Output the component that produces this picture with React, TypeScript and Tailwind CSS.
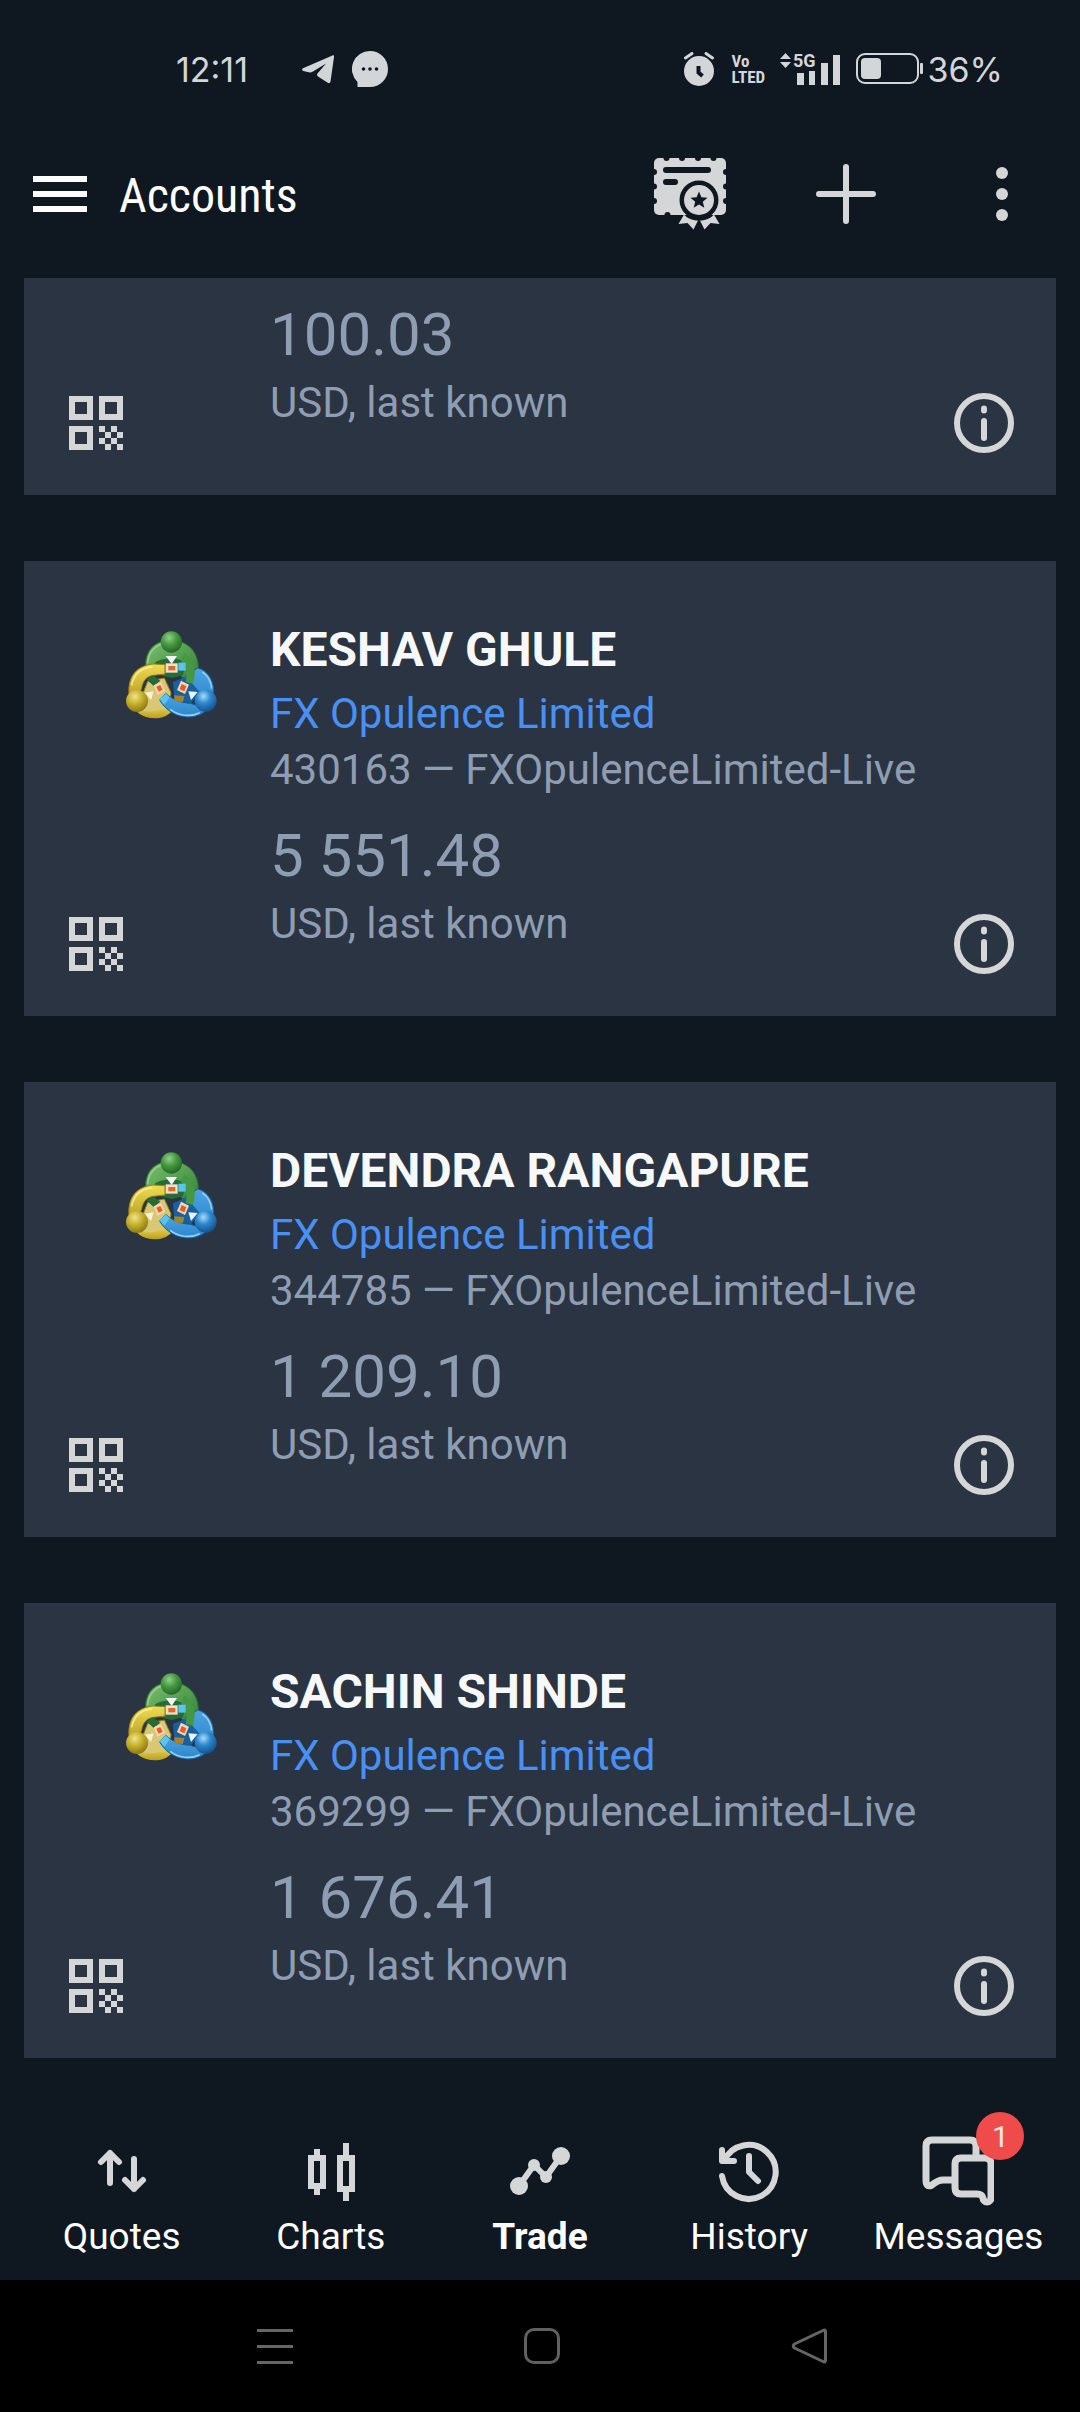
type Account = {
  name: string;
  broker: string;
  login: string;
  balance: string;
};

const accounts: Account[] = [
  { name: "KESHAV GHULE", broker: "FX Opulence Limited", login: "430163 — FXOpulenceLimited-Live", balance: "5 551.48" },
  { name: "DEVENDRA RANGAPURE", broker: "FX Opulence Limited", login: "344785 — FXOpulenceLimited-Live", balance: "1 209.10" },
  { name: "SACHIN SHINDE", broker: "FX Opulence Limited", login: "369299 — FXOpulenceLimited-Live", balance: "1 676.41" },
];

function QrIcon() {
  return (
    <svg className="size-[54px]" viewBox="0 0 9 9" fill="currentColor" fillRule="evenodd" shapeRendering="crispEdges" aria-hidden="true">
      <path d="M0 0h4v4H0zM1 1v2h2V1zM5 0h4v4H5zM6 1v2h2V1zM0 5h4v4H0zM1 6v2h2V6z" />
      <path d="M5 5h1v1H5zM7 5h1v1H7zM6 6h1v1H6zM8 6h1v1H8zM5 7h1v1H5zM7 7h1v1H7zM6 8h1v1H6zM8 8h1v1H8z" />
    </svg>
  );
}

function InfoIcon() {
  return (
    <svg className="size-[60px]" viewBox="0 0 60 60" fill="none" stroke="currentColor" strokeWidth="6" strokeLinecap="round" aria-hidden="true">
      <circle cx="30" cy="30" r="27" />
      <path d="M30 15.500V17.500M30 28V45" />
    </svg>
  );
}

function BrokerLogo() {
  return (
    <svg className="h-[90px] w-[92px]" viewBox="74 90 276 270" fill="none" aria-hidden="true">
      <defs>
        <radialGradient id="greenHead" cx="0.4" cy="0.3" r="0.7">
          <stop offset="0" stopColor="#8fd08a" />
          <stop offset="0.5" stopColor="#45983f" />
          <stop offset="1" stopColor="#24682a" />
        </radialGradient>
        <radialGradient id="yellowHead" cx="0.4" cy="0.3" r="0.7">
          <stop offset="0" stopColor="#f0e388" />
          <stop offset="0.5" stopColor="#c5b02c" />
          <stop offset="1" stopColor="#8d7a14" />
        </radialGradient>
        <radialGradient id="blueHead" cx="0.4" cy="0.3" r="0.7">
          <stop offset="0" stopColor="#a5dcfa" />
          <stop offset="0.45" stopColor="#3089cf" />
          <stop offset="1" stopColor="#135493" />
        </radialGradient>
        <linearGradient id="greenBody" x1="0" y1="0" x2="1" y2="1">
          <stop offset="0" stopColor="#7cc06f" />
          <stop offset="1" stopColor="#2f7f34" />
        </linearGradient>
        <linearGradient id="yellowBody" x1="0" y1="0" x2="0" y2="1">
          <stop offset="0" stopColor="#f0dc55" />
          <stop offset="1" stopColor="#b89d22" />
        </linearGradient>
        <linearGradient id="blueBody" x1="0" y1="0" x2="0" y2="1">
          <stop offset="0" stopColor="#4ca4e0" />
          <stop offset="1" stopColor="#2c86cc" />
        </linearGradient>
      </defs>
      <path d="M136 205C132 150 165 121 212 121c50 0 84 36 82 86-1 18-8 34-16 46l-26-12-14-20h-70Z" fill="url(#greenBody)" stroke="#2b6b35" strokeWidth="3" />
      <path d="M142 190c2-38 28-60 66-62" stroke="#b6e0a4" strokeWidth="5" opacity="0.6" />
      <path d="M162 190c14-18 86-22 94 4l-8 32-34 8-34-8Z" fill="#256c37" />
      <path d="M292 204c28 6 46 34 48 64 1 20-4 36-10 46l-60-30-28-46Z" fill="url(#blueBody)" stroke="#1c5c96" strokeWidth="3" />
      <path d="M306 216c16 10 26 28 28 50" stroke="#b3e1fb" strokeWidth="5" opacity="0.7" />
      <path d="M218 246l40-16 40 46-26 34-50-12Z" fill="#1a609f" />
      <path d="M142 244l50-10 20 44-4 38-40 36c-30 0-46-6-60-20Z" fill="#d8c876" stroke="#8c7b1d" strokeWidth="3" />
      <path d="M86 282c-4-54 24-86 74-90l34 2v28l-34 4c-22 3-32 16-36 38l-12 30Z" fill="url(#yellowBody)" stroke="#94841c" strokeWidth="3" />
      <path d="M94 256c6-34 26-52 62-56" stroke="#fff0a0" strokeWidth="5" opacity="0.8" />
      <path d="M110 326c28 14 68 8 98-12l4 22c-24 26-70 24-98 2Z" fill="url(#yellowBody)" />
      <path d="M252 160c34 22 36 60 26 92l-22-6c6-28 4-46-14-62Z" fill="#459742" />
      <path d="M178 300l18-20c20 18 42 28 74 30l52 16c-24 30-74 32-106 12-18-10-30-24-38-38Z" fill="url(#blueBody)" stroke="#185d9a" strokeWidth="3" />
      <path d="M210 328c24 20 60 24 88 10" stroke="#95d2f5" strokeWidth="5" />
      <path d="M178 298l18-18 12 12-16 22Z" fill="#5cc3ef" />
      <path d="M138 238l20-12 22 16-20 16Z" fill="#266a34" />
      <path d="M222 286l30 2-4 18-26-2Z" fill="#a3832b" />
      <path d="M196 168h34l-16 24Z" fill="#f3f6f8" />
      <path d="M134 278l26-4-8 26Z" fill="#f7f2dc" />
      <path d="M264 274l28 2-20 24Z" fill="#e9f5fc" />
      <path d="M234 188h22v24h-22z" fill="#59c4ee" />
      <path d="M196 190h36v28h-36z" fill="#f4dfc8" />
      <path d="M204 198h21v13h-21z" fill="#df6a2e" />
      <path d="M160 256l22-10 12 26-22 12Z" fill="#f7d7b4" />
      <path d="M168 260l12-5 7 14-12 6Z" fill="#ea5a27" />
      <path d="M242 242l24 12-12 28-24-12Z" fill="#f7d7b4" />
      <path d="M244 252l14 7-6 15-14-6Z" fill="#ea5a27" />
      <circle cx="213" cy="126" r="32" fill="url(#greenHead)" />
      <circle cx="110" cy="303" r="33" fill="url(#yellowHead)" />
      <circle cx="316" cy="302" r="33" fill="url(#blueHead)" />
    </svg>
  );
}

function CertificateIcon() {
  return (
    <svg className="size-[72px]" viewBox="0 0 72 72" fill="currentColor" aria-hidden="true">
      <defs>
        <mask id="stamp" maskUnits="userSpaceOnUse" x="0" y="0" width="72" height="72">
          <rect width="72" height="57" rx="5" fill="#fff" />
          <g fill="#000">
            <circle cx="12.500" cy="0" r="3" />
            <circle cx="28" cy="0" r="3" />
            <circle cx="44" cy="0" r="3" />
            <circle cx="59.500" cy="0" r="3" />
            <circle cx="0" cy="14" r="3" />
            <circle cx="0" cy="28.500" r="3" />
            <circle cx="0" cy="43" r="3" />
            <circle cx="72" cy="14" r="3" />
            <circle cx="72" cy="28.500" r="3" />
            <circle cx="72" cy="43" r="3" />
            <circle cx="13.500" cy="57" r="3" />
            <rect x="9" y="9" width="48" height="6" rx="3" />
            <rect x="9" y="21" width="15" height="6" rx="3" />
            <circle cx="45" cy="42" r="19.500" />
          </g>
        </mask>
      </defs>
      <rect width="72" height="57" mask="url(#stamp)" />
      <path d="M30 56.500 24.500 66l9-1 6 6.500L44 62.500C38 62.500 33 60 30 56.500ZM60 56.500 65.500 66l-9-1-6 6.500L46 62.500C52 62.500 57 60 60 56.500Z" />
      <path fillRule="evenodd" d="M45 27a15 15 0 1 1 0 30 15 15 0 0 1 0-30Zm0 6.500-2.400 5.700-6.100.5 4.700 4-1.500 6 5.300-3.200 5.300 3.200-1.500-6 4.700-4-6.100-.5Z" />
    </svg>
  );
}

function StatusBar() {
  return (
    <div className="flex h-[138px] items-center justify-between pr-[77px] pl-44 font-['Inter',sans-serif] text-[34px] text-[#d3d6d9]">
      <div className="flex items-center">
        <time>12:11</time>
        <svg className="ml-[54px] h-7 w-8" viewBox="0 0 32 28" fill="currentColor" aria-label="Telegram">
          <path d="M31 0.300C32 0 32.300 0.600 32 2L28.500 26.500C28.300 28 27 28.500 25.800 27.700L16 21.500C14.800 20.600 14.700 19.300 15.700 18.200L24 8.500 11 16.500C9 17.700 7.500 17.500 5.500 17L1.500 16C0 15.500-.4 14 1 13.200Z" />
        </svg>
        <svg className="ml-[18px] size-9" viewBox="0 0 36 36" fill="currentColor" aria-label="Chat">
          <path d="M18 0a18 18 0 1 1 0 36H5.500V31A18 18 0 0 1 18 0Z" />
          <g fill="#0f1720">
            <circle cx="11.500" cy="18" r="1.800" />
            <circle cx="18" cy="18" r="1.800" />
            <circle cx="24.500" cy="18" r="1.800" />
          </g>
        </svg>
      </div>
      <div className="flex items-center">
        <svg className="h-[34px] w-[30px]" viewBox="0 0 30 34" fill="currentColor" aria-label="Alarm">
          <circle cx="15" cy="19" r="15" />
          <path d="M1.500 6 8 1.500M28.500 6 22 1.500" stroke="currentColor" strokeWidth="3" strokeLinecap="round" />
          <path d="M14.500 14v6.500l4 3.500" fill="none" stroke="#0f1720" strokeWidth="4" />
        </svg>
        <div className="ml-[18px] flex w-9 flex-col font-['Roboto_Condensed','Liberation_Sans_Narrow',sans-serif] text-[17px] leading-4 font-bold">
          <span>Vo</span>
          <span>LTED</span>
        </div>
        <svg className="ml-3 h-10 w-[60px]" viewBox="0 -4 60 40" fill="currentColor" aria-label="5G signal">
          <path d="M5.500 0 11 6H0ZM0 9h11l-5.500 6Z" />
          <text x="13" y="14" fontFamily="Roboto, sans-serif" fontSize="18" fontWeight="700">5G</text>
          <path d="M17 20h7v12h-7zM29 18h6v14h-6zM41 10h7v22h-7zM53 2h7v30h-7z" />
        </svg>
        <svg className="ml-4 h-8 w-[68px]" viewBox="0 0 68 32" aria-label="Battery">
          <rect x="1" y="1" width="61" height="29" rx="8" fill="none" stroke="currentColor" strokeWidth="2" />
          <rect x="5" y="5" width="20" height="21" rx="4" fill="currentColor" />
          <rect x="64" y="10" width="3" height="11" rx="1" fill="currentColor" />
        </svg>
        <span className="ml-1">36%</span>
      </div>
    </div>
  );
}

function Header() {
  return (
    <header className="flex h-28 items-center justify-between pr-[54px] pl-[33px] text-[#d5d6d7]">
      <div className="flex items-center gap-8 text-white">
        <button type="button" aria-label="Menu" className="flex w-[54px] flex-col gap-[9px]">
          <span className="h-1.5 bg-white" />
          <span className="h-1.5 bg-white" />
          <span className="h-1.5 bg-white" />
        </button>
        <h1 className="pt-1 font-['Roboto_Condensed','Liberation_Sans_Narrow','Roboto',sans-serif] text-[48px] leading-14">Accounts</h1>
      </div>
      <div className="flex items-center">
        <button type="button" aria-label="Certificates"><CertificateIcon /></button>
        <button type="button" aria-label="Add account" className="ml-[90px]">
          <svg className="size-[60px]" viewBox="0 0 60 60" stroke="currentColor" strokeWidth="6" strokeLinecap="round" aria-hidden="true">
            <path d="M30 3v54M3 30h54" />
          </svg>
        </button>
        <button type="button" aria-label="More" className="ml-24">
          <svg className="h-[60px] w-[54px]" viewBox="0 0 54 60" fill="currentColor" aria-hidden="true">
            <circle cx="30" cy="9" r="6" />
            <circle cx="30" cy="30" r="6" />
            <circle cx="30" cy="51" r="6" />
          </svg>
        </button>
      </div>
    </header>
  );
}

function AccountCard({ account, balance }: { account?: Account; balance: string }) {
  return (
    <article className="flex bg-[#2a3442] pr-[42px] pl-[45px] text-[42px] leading-14 text-[#8f9db3]">
      <div className="flex w-[201px] shrink-0 flex-col justify-between pb-[45px]">
        <div className="pt-[69px] pl-14">{account && <BrokerLogo />}</div>
        <button type="button" aria-label="Show QR code" className="self-start text-[#d5d7d7]"><QrIcon /></button>
      </div>
      <div className={account ? "grow pt-[61px] pb-16" : "grow pt-[21px] pb-16"}>
        {account && (
          <div className="mb-[22px]">
            <h2 className="mb-2 text-[48px] font-bold text-[#f6f8f9]">{account.name}</h2>
            <a href="#broker" className="block text-[#4990f4]">{account.broker}</a>
            <p>{account.login}</p>
          </div>
        )}
        <p className="mb-1 text-[60px] leading-[72px]">{balance}</p>
        <p>USD, last known</p>
      </div>
      <button type="button" aria-label="Account details" className="mb-[42px] self-end text-[#d5d7d7]"><InfoIcon /></button>
    </article>
  );
}

const navItems = [
  {
    label: "Quotes",
    icon: <path d="M24 47V17M15 26l9-9 9 9M48 23v30M39 44l9 9 9-9" strokeWidth="6" />,
  },
  {
    label: "Charts",
    icon: (
      <path d="M16 22h12v28H16zM45 22h12v31H45zM22 13v8M22 51v8M51 7v14M51 54v11" strokeWidth="6" strokeLinecap="butt" strokeLinejoin="miter" />
    ),
  },
  {
    label: "Trade",
    active: true,
    icon: (
      <>
        <path d="M15 50 30 29 42 41 57 20" strokeWidth="6" />
        <g fill="currentColor" stroke="none">
          <circle cx="15" cy="50" r="9" />
          <circle cx="30" cy="29" r="6" />
          <circle cx="42" cy="41" r="6" />
          <circle cx="57" cy="20" r="9" />
        </g>
      </>
    ),
  },
  {
    label: "History",
    icon: <path d="M9 40A27 27 0 1 0 11 25M9 14V25H21M36 20V36L45 45" strokeWidth="6" />,
  },
  {
    label: "Messages",
    badge: "1",
    icon: (
      <path d="M54 20V10Q54 4 48 4H10Q4 4 4 10V44Q4 52 10 49C14 46 16 44 21 44H30M39 22H63Q69 22 69 28V62A4 4 0 0 1 61 62Q60 58 55 58H39Q33 58 33 52V28Q33 22 39 22Z" strokeWidth="7" />
    ),
  },
];

function BottomNav() {
  return (
    <nav className="mt-auto grid grid-cols-5 px-[17px] pt-[78px] pb-[18px]">
      {navItems.map((item) => (
        <button key={item.label} type="button" className="flex flex-col items-center gap-1">
          <span className="relative text-[#d5d6d7]">
            <svg className="size-[72px]" viewBox="0 0 72 72" fill="none" stroke="currentColor" strokeLinecap="round" strokeLinejoin="round" aria-hidden="true">
              {item.icon}
            </svg>
            {item.badge && (
              <span className="absolute -top-6 left-[54px] flex size-12 items-center justify-center rounded-full bg-[#ef4b4b] text-[30px] text-[#fbe6e6]">
                {item.badge}
              </span>
            )}
          </span>
          <span className={item.active ? "text-[37px] leading-[50px] font-bold text-white" : "text-[37px] leading-[50px] text-white"}>
            {item.label}
          </span>
        </button>
      ))}
    </nav>
  );
}

function SystemNav() {
  return (
    <div className="grid h-[132px] grid-cols-3 place-items-center bg-black pr-[138px] pl-[142px] text-[#666]">
      <button type="button" aria-label="Recent apps" className="flex w-9 flex-col gap-[13px]">
        <span className="h-[3px] bg-[#666]" />
        <span className="h-[3px] bg-[#666]" />
        <span className="h-[3px] bg-[#666]" />
      </button>
      <button type="button" aria-label="Home" className="size-9 rounded-[10px] border-[3px] border-[#606060]" />
      <button type="button" aria-label="Back">
        <svg className="size-9" viewBox="0 0 36 36" fill="none" stroke="currentColor" strokeWidth="3" strokeLinejoin="round" aria-hidden="true">
          <path d="M32 2.500Q34.500 1 34.500 4V32Q34.500 35 32 33.500L3.500 20Q1 18 3.500 16Z" />
        </svg>
      </button>
    </div>
  );
}

export default function App() {
  return (
    <div className="flex min-h-screen flex-col bg-[#0f1720] font-['Roboto',sans-serif]">
      <StatusBar />
      <Header />
      <main className="flex flex-col gap-[66px] px-6 pt-7">
        <AccountCard balance="100.03" />
        {accounts.map((account) => (
          <AccountCard key={account.name} account={account} balance={account.balance} />
        ))}
      </main>
      <BottomNav />
      <SystemNav />
    </div>
  );
}
